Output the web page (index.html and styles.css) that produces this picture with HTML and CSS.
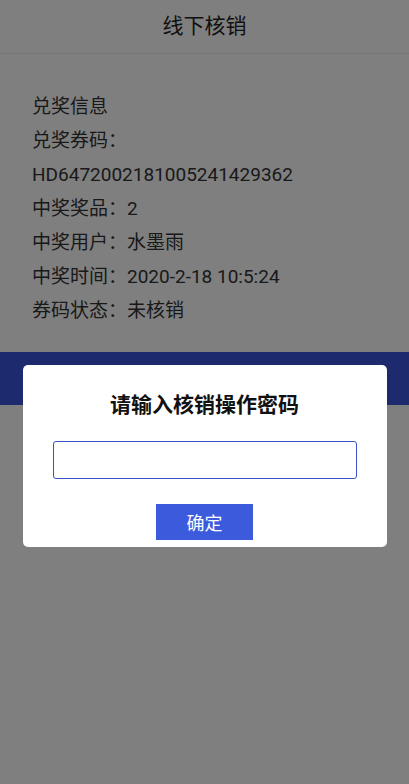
FILE: index.html
```
<!DOCTYPE html>
<html>
<head>
  <meta charset="utf-8">
  <title>线下核销</title>
  <link rel="stylesheet" href="styles.css">
</head>
<body>
  <div class="header">线下核销</div>

  <div class="info">
    <p>兑奖信息</p>
    <p>兑奖券码：</p>
    <p>HD6472002181005241429362</p>
    <p>中奖奖品：2</p>
    <p>中奖用户：水墨雨</p>
    <p>中奖时间：2020-2-18 10:5:24</p>
    <p>券码状态：未核销</p>
  </div>

  <div class="action-bar"></div>

  <!-- password dialog -->
  <div class="mask">
    <div class="dialog">
      <h3>请输入核销操作密码</h3>
      <input class="pwd" type="password">
      <button class="confirm">确定</button>
    </div>
  </div>
</body>
</html>
```

FILE: styles.css
```
body { margin: 0; background: #fff; color: #333; font-family: Roboto, "Noto Sans CJK SC", sans-serif; }
.header { height: 53px; line-height: 53px; text-align: center; font-size: 21px; color: #222; border-bottom: 1px solid #eee; }
.info { padding: 36px 32px 0; font-size: 19px; }
.info p { margin: 0; line-height: 34px; }
.action-bar { margin-top: 24px; height: 53px; background: #3c54dc; }
.mask { position: fixed; top: 0; left: 0; right: 0; bottom: 0; background: rgba(0, 0, 0, 0.5); display: flex; flex-direction: column; align-items: center; }
.dialog { margin-top: 365px; width: 364px; box-sizing: border-box; padding: 28px 30px 7px; background: #fff; border-radius: 5px; display: flex; flex-direction: column; align-items: center; }
.dialog h3 { margin: 0; font-size: 21px; line-height: 24px; color: #111; font-weight: bold; }
.pwd { margin-top: 24px; width: 304px; height: 38px; box-sizing: border-box; border: 1px solid #3d54c6; border-radius: 3px; outline: none; }
.confirm { margin-top: 25px; width: 97px; height: 36px; border: none; background: #3c5bdc; color: #fff; font-size: 18px; font-family: Roboto, "Noto Sans CJK SC", sans-serif; }
```
